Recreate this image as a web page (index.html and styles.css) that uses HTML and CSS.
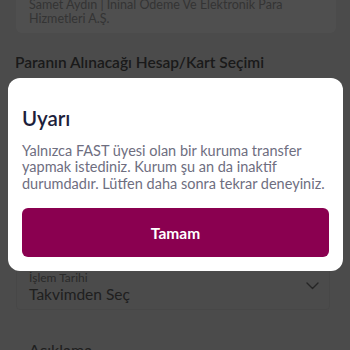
FILE: index.html
```html
<!DOCTYPE html>
<html lang="tr">
<head>
<meta charset="utf-8">
<title>Uyarı</title>
<link rel="stylesheet" href="styles.css">
</head>
<body>
<main class="page">
  <section class="info-card">
    <p class="info-text">Samet Aydın | İninal Ödeme Ve Elektronik Para Hizmetleri A.Ş.</p>
  </section>
  <h2 class="section-title">Paranın Alınacağı Hesap/Kart Seçimi</h2>
  <section class="account-card"></section>
  <div class="field">
    <div class="field-body">
      <span class="field-label">İşlem Tarihi</span>
      <span class="field-value">Takvimden Seç</span>
    </div>
    <svg class="chevron" width="13" height="8" viewBox="0 0 13 8"><path d="M1 1l5.5 5.5L12 1" fill="none" stroke="#777" stroke-width="1.4" stroke-linecap="round" stroke-linejoin="round"/></svg>
  </div>
  <div class="field-plain">Açıklama</div>
</main>
<div class="overlay"></div>
<div class="dialog" role="alertdialog">
  <h1 class="dialog-title">Uyarı</h1>
  <p class="dialog-text">Yalnızca FAST üyesi olan bir kuruma transfer yapmak istediniz. Kurum şu an da inaktif durumdadır. Lütfen daha sonra tekrar deneyiniz.</p>
  <button class="dialog-button">Tamam</button>
</div>
</body>
</html>
```
FILE: styles.css
```css
html, body {
  margin: 0;
  padding: 0;
}
body {
  background: #f1f1f1;
  font-family: Lato, "Noto Sans", sans-serif;
  width: 350px;
  height: 350px;
  overflow: hidden;
}
.page {
  padding: 0 14px 0 16px;
}
.info-card {
  background: #ffffff;
  margin-top: -6px;
  padding: 4px 13px 6px;
  height: 29px;
  border-radius: 0 0 6px 6px;
}
.info-text {
  margin: 0;
  font-size: 12.5px;
  line-height: 13.5px;
  color: #a8a8a8;
  width: 262px;
}
.section-title {
  margin: 19px 0 0 -1px;
  font-size: 15.5px;
  line-height: 20px;
  font-weight: 600;
  color: #555;
}
.account-card {
  margin-top: 6px;
  height: 172px;
  background: #fff;
  border-radius: 8px;
}
.field {
  margin-top: 12px;
  height: 46px;
  border: 1px solid #e4e4e4;
  border-radius: 4px;
  display: flex;
  align-items: center;
  padding: 0 10px 0 12px;
  width: 290px;
}
.field-body {
  display: flex;
  flex-direction: column;
  flex: 1;
  padding-top: 4px;
}
.field-label {
  font-size: 12px;
  line-height: 13px;
  color: #888;
}
.field-value {
  font-size: 15.5px;
  line-height: 21px;
  color: #666;
}
.field-plain {
  margin: 30px 0 0 13px;
  font-size: 16px;
  color: #666;
}
.overlay {
  position: fixed;
  inset: 0;
  background: rgba(0, 0, 0, 0.69);
}
.dialog {
  position: fixed;
  left: 8px;
  top: 78px;
  width: 335px;
  height: 193px;
  box-sizing: border-box;
  padding: 28px 10px 14px 14px;
  background: #fff;
  border-radius: 12px;
  display: flex;
  flex-direction: column;
}
.dialog-title {
  margin: 0;
  font-size: 20.5px;
  line-height: 24px;
  font-weight: 600;
  color: #1d1e3b;
}
.dialog-text {
  margin: 12.5px 0 0;
  font-size: 14.5px;
  line-height: 16.5px;
  color: #6e6e7f;
}
.dialog-button {
  margin: auto 4px 0 0;
  height: 49px;
  border: 0;
  border-radius: 6px;
  background: #8a0050;
  color: #fff;
  font-family: inherit;
  font-size: 15.5px;
  font-weight: 700;
}
```
